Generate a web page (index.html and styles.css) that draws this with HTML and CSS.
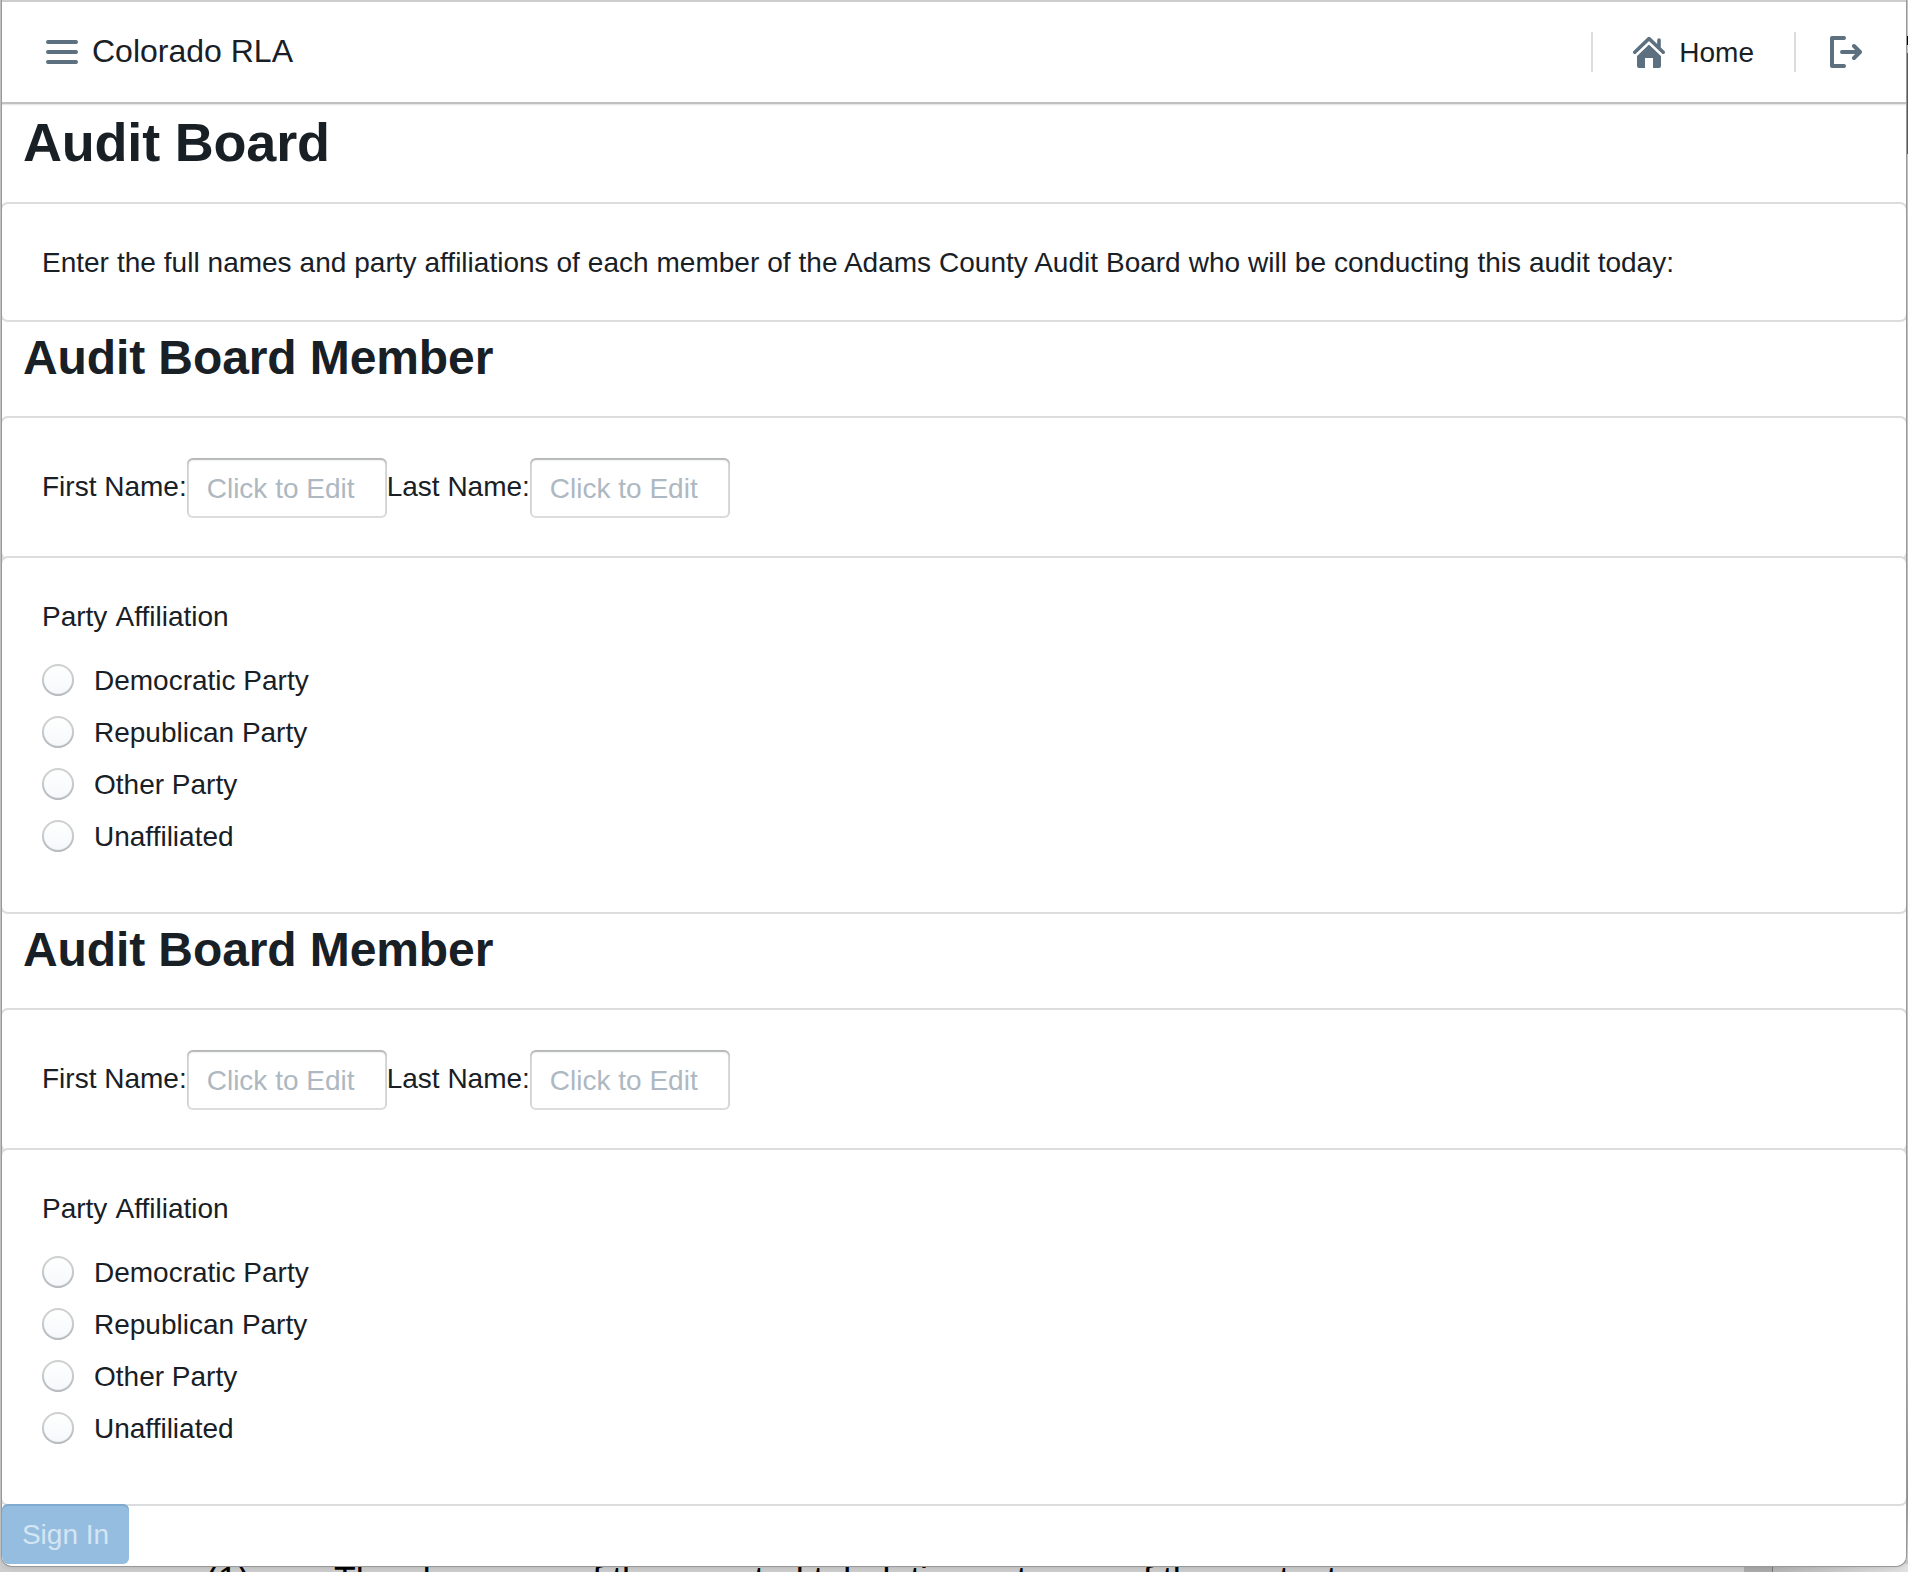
FILE: index.html
```html
<!DOCTYPE html>
<html lang="en">
<head>
<meta charset="utf-8">
<title>Colorado RLA</title>
<link rel="stylesheet" href="styles.css">
</head>
<body>
<div class="backdrop" aria-hidden="true">
  <div class="backdrop-side"></div>
  <div class="backdrop-edge"></div>
  <span class="backdrop-num">(1)</span>
  <span class="backdrop-text">The closeness of the reported tabulation outcome of the contests</span>
</div>
<main class="window">
  <header class="navbar">
    <div class="nav-group">
      <svg class="icon" viewBox="0 0 16 16"><path d="M1 3h14M1 8h14M1 13h14" fill="none" stroke="currentColor" stroke-width="2" stroke-linecap="round"/></svg>
      <span class="brand">Colorado RLA</span>
    </div>
    <div class="nav-group">
      <span class="divider"></span>
      <a class="nav-link home">
        <svg class="icon" viewBox="0 0 16 16"><path d="M2 10l6-5.700l6 5.700v5a1 1 0 0 1-1 1h-3v-5H6v5H3a1 1 0 0 1-1-1z" fill="currentColor"/><path d="M.9 8.100L8 1.300l7.100 6.800M13 5.500V2" fill="none" stroke="currentColor" stroke-width="1.800" stroke-linecap="round" stroke-linejoin="round"/><path d="M1.700 9.400L8 3.400l6.300 6" fill="none" stroke="#fff" stroke-width=".9"/></svg>
        <span class="nav-text">Home</span>
      </a>
      <span class="divider"></span>
      <a class="nav-link logout">
        <svg class="icon" viewBox="0 0 16 16"><path d="M7 1H1v14h6M6 8h8.500M12 5l3 3l-3 3" fill="none" stroke="currentColor" stroke-width="2" stroke-linecap="round" stroke-linejoin="round"/></svg>
      </a>
    </div>
  </header>
  <h1>Audit Board</h1>
  <section class="card intro">Enter the full names and party affiliations of each member of the Adams County Audit Board who will be conducting this audit today:</section>

  <h2>Audit Board Member</h2>
  <section class="card names">
    <label>First Name:</label><div class="field">Click to Edit</div><label>Last Name:</label><div class="field">Click to Edit</div>
  </section>
  <section class="card party">
    <div class="legend">Party Affiliation</div>
    <div class="option"><span class="radio"></span><span class="option-text">Democratic Party</span></div>
    <div class="option"><span class="radio"></span><span class="option-text">Republican Party</span></div>
    <div class="option"><span class="radio"></span><span class="option-text">Other Party</span></div>
    <div class="option"><span class="radio"></span><span class="option-text">Unaffiliated</span></div>
  </section>

  <h2>Audit Board Member</h2>
  <section class="card names">
    <label>First Name:</label><div class="field">Click to Edit</div><label>Last Name:</label><div class="field">Click to Edit</div>
  </section>
  <section class="card party">
    <div class="legend">Party Affiliation</div>
    <div class="option"><span class="radio"></span><span class="option-text">Democratic Party</span></div>
    <div class="option"><span class="radio"></span><span class="option-text">Republican Party</span></div>
    <div class="option"><span class="radio"></span><span class="option-text">Other Party</span></div>
    <div class="option"><span class="radio"></span><span class="option-text">Unaffiliated</span></div>
  </section>
  <button class="submit" disabled>Sign In</button>
</main>
</body>
</html>
```
FILE: styles.css
```css
* { box-sizing: border-box; }
body {
  position: relative;
  margin: 0;
  height: 1572px;
  padding: 2px;
  overflow: hidden;
  background: #cdcdcd;
  color: #182026;
  font: 28px/36px "Liberation Sans", Arial, sans-serif;
  font-variant-ligatures: none;
}
.window {
  position: relative;
  height: 1564px;
  overflow: hidden;
  background: #fff;
  border-radius: 0 0 10px 10px;
}
/* Document showing behind the window */
.backdrop {
  position: absolute;
  inset: 0;
  overflow: hidden;
  color: #000;
  font-size: 35.5px;
  white-space: nowrap;
}
.backdrop::after {
  content: "";
  position: absolute;
  inset: -8px 2px 6px;
  border-radius: 0 0 10px 10px;
  box-shadow: 0 0 0 1px #999, 0 0 6px rgba(0, 0, 0, .2);
}
.backdrop-side {
  position: absolute;
  top: 0;
  right: 0;
  width: 2px;
  height: 1560px;
  background: linear-gradient(#d0d0d0 0 36px, #000 36px 45px, #d0d0d0 45px 53px, #4a6190 53px 154px, #cdcdcd 154px 1300px, #999 1500px, #ddd);
}
.backdrop-edge {
  position: absolute;
  right: 0;
  bottom: 0;
  width: 164px;
  height: 8px;
  background: linear-gradient(90deg, #ababab 0 28px, #777 28px 29px, #b5b5b5 29px, #e2e2e2);
}
.backdrop-num, .backdrop-text { position: absolute; top: 1561px; }
.backdrop-num { left: 206px; }
.backdrop-text { left: 334px; }

.navbar {
  position: relative;
  display: flex;
  justify-content: space-between;
  height: 100px;
  padding: 0 44px;
  box-shadow: 0 2px 0 #c0c0c0, 0 3px 1px rgba(16, 22, 26, .1);
}
.nav-group, .nav-link { display: flex; align-items: center; }
.icon { width: 32px; height: 32px; color: #5c7080; flex: none; }
.brand { margin-left: 14px; padding-bottom: 2px; font-size: 32px; }
.nav-text { padding-top: 2px; }
.divider { width: 2px; height: 40px; background: #dbdcdd; }
.home { padding: 0 40px; gap: 14px; }
.logout { padding-left: 34px; }

h1, h2 { margin: 0; padding-left: 21px; font-weight: 700; letter-spacing: -.1px; }
h1 { height: 102px; padding-top: 10px; font-size: 54px; line-height: 60px; letter-spacing: -.2px; }
h2 { height: 98px; padding-top: 10px; font-size: 48px; line-height: 56px; }

.card {
  position: relative;
  padding: 41px 40px 39px;
  border-radius: 6px;
  background: #fff;
  box-shadow: 0 0 0 2px #dbdcdd;
}
.intro { word-spacing: .2px; }
.names { display: flex; height: 140px; padding: 40px; }
.names label { line-height: 58px; }
.field {
  width: 200px;
  height: 60px;
  padding: 0 20px;
  border-radius: 6px;
  color: #adb8c1;
  line-height: 62px;
  box-shadow: inset 0 0 0 2px rgba(16, 22, 26, .15), inset 0 2px 2px rgba(16, 22, 26, .2);
}
.party { height: 354px; }
.legend { margin-bottom: 29px; word-spacing: 2px; }
.option { display: flex; align-items: center; height: 32px; margin-bottom: 20px; }
.option-text { padding-top: 2px; }
.radio {
  width: 32px;
  height: 32px;
  margin-right: 20px;
  border-radius: 50%;
  background: linear-gradient(#fff, #f5f8fa);
  box-shadow: inset 0 0 0 2px rgba(16, 22, 26, .2), inset 0 -2px 2px rgba(16, 22, 26, .1);
}
.submit {
  position: relative;
  display: block;
  width: 127px;
  height: 60px;
  padding: 2px 0 0;
  border: 0;
  border-radius: 6px;
  background: #94bde0;
  box-shadow: inset 0 2px #80abd0;
  color: #d4e5f3;
  font: inherit;
}
```
